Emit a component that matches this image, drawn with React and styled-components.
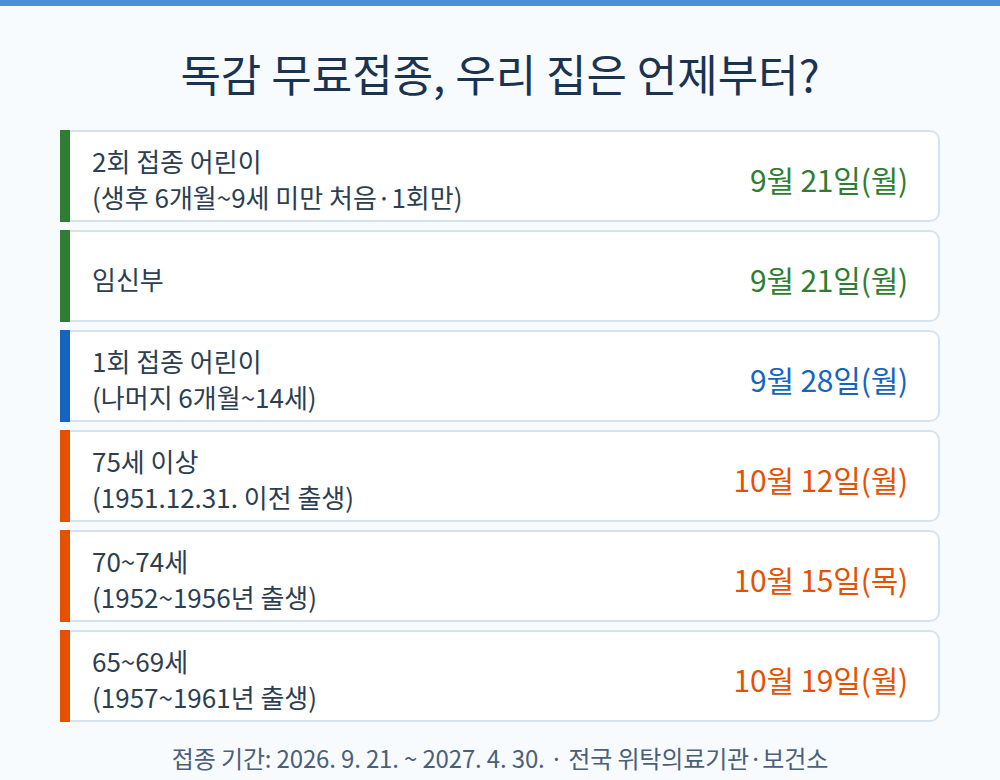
import styled, { createGlobalStyle } from 'styled-components';

const Global = createGlobalStyle`
  html, body {
    margin: 0;
    padding: 0;
    background: #f8fbfe;
  }
  body {
    font-family: "Noto Sans CJK KR", "Noto Sans", sans-serif;
  }
`;

const Page = styled.div`
  width: 1000px;
  height: 780px;
  background: #f8fbfe;
  border-top: 6px solid #4a90d9;
  box-sizing: border-box;
  display: flex;
  flex-direction: column;
  align-items: center;
  overflow: hidden;
`;

const Title = styled.h1`
  margin: 37px 0 0;
  height: 60px;
  font-size: 44px;
  line-height: 60px;
  font-weight: 400;
  letter-spacing: 0;
  color: #1a3350;
`;

const List = styled.ul`
  list-style: none;
  margin: 27px 0 0;
  padding: 0;
  width: 880px;
  display: flex;
  flex-direction: column;
  gap: 8px;
`;

const Card = styled.li`
  height: 92px;
  display: flex;
`;

const Bar = styled.div`
  width: 10px;
  flex-shrink: 0;
  background: ${(p) => p.$color};
`;

const Body = styled.div`
  flex: 1;
  box-sizing: border-box;
  background: #fff;
  border: 2px solid #d6e3ee;
  border-left: none;
  border-radius: 0 10px 10px 0;
  display: flex;
  align-items: center;
  justify-content: space-between;
  padding: 6px 30px 0 22px;
`;

const Label = styled.div`
  font-size: 26px;
  line-height: 36px;
  color: #2c3e50;
`;

const Date = styled.div`
  font-size: 30px;
  color: ${(p) => p.$color};
  letter-spacing: -0.2px;
`;

const Footer = styled.p`
  margin: 18px 0 0;
  font-size: 24px;
  color: #4a6078;
  letter-spacing: -0.15px;
`;

const GREEN = '#2e7d32';
const BLUE = '#1565c0';
const ORANGE = '#e65100';

const rows = [
  { lines: ['2회 접종 어린이', '(생후 6개월~9세 미만 처음·1회만)'], date: '9월 21일(월)', color: GREEN },
  { lines: ['임신부'], date: '9월 21일(월)', color: GREEN },
  { lines: ['1회 접종 어린이', '(나머지 6개월~14세)'], date: '9월 28일(월)', color: BLUE },
  { lines: ['75세 이상', '(1951.12.31. 이전 출생)'], date: '10월 12일(월)', color: ORANGE },
  { lines: ['70~74세', '(1952~1956년 출생)'], date: '10월 15일(목)', color: ORANGE },
  { lines: ['65~69세', '(1957~1961년 출생)'], date: '10월 19일(월)', color: ORANGE },
];

export default () => (
  <Page>
    <Global />
    <Title>독감 무료접종, 우리 집은 언제부터?</Title>
    <List>
      {rows.map((r, i) => (
        <Card key={i}>
          <Bar $color={r.color} />
          <Body>
            <Label>
              {r.lines.map((l, j) => (
                <div key={j}>{l}</div>
              ))}
            </Label>
            <Date $color={r.color}>{r.date}</Date>
          </Body>
        </Card>
      ))}
    </List>
    <Footer>접종 기간: 2026. 9. 21. ~ 2027. 4. 30. · 전국 위탁의료기관·보건소</Footer>
  </Page>
);
